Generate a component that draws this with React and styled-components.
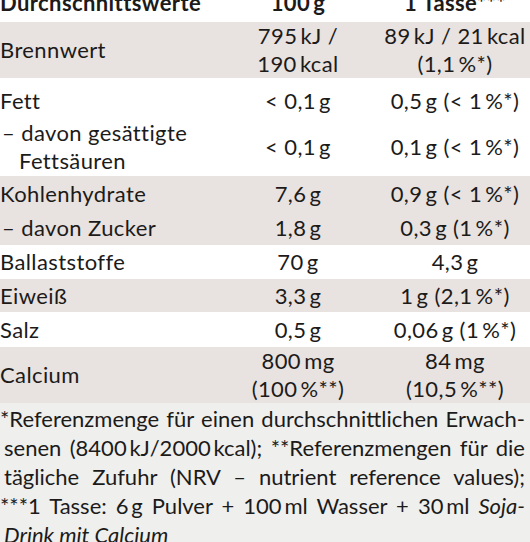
import React from 'react';
import styled, { createGlobalStyle } from 'styled-components';

const GlobalStyle = createGlobalStyle`
    html, body {
        margin: 0;
        padding: 0;
        background: #fff;
        overflow: hidden;
    }
    body {
        font-family: Lato, "Open Sans", sans-serif;
        font-size: 22px;
        letter-spacing: 0.4px;
        color: #1c1b1a;
    }
`

const T = '\u2009';

const rows = [
    { label: 'Brennwert', a: [`795${T}kJ /`, `190${T}kcal`], b: [`89${T}kJ / 21${T}kcal`, `(1,1${T}%*)`], shade: true, h: 56 },
    { label: 'Fett', a: [`< 0,1${T}g`], b: [`0,5${T}g (< 1${T}%*)`], h: 40, top: 5 },
    { label: ['– davon gesättigte', 'Fettsäuren'], sub: true, a: [`< 0,1${T}g`], b: [`0,1${T}g (< 1${T}%*)`], h: 58 },
    { label: 'Kohlenhydrate', a: [`7,6${T}g`], b: [`0,9${T}g (< 1${T}%*)`], shade: true, h: 35 },
    { label: '– davon Zucker', sub: true, a: [`1,8${T}g`], b: [`0,3${T}g (1${T}%*)`], shade: true, h: 34 },
    { label: 'Ballaststoffe', a: [`70${T}g`], b: [`4,3${T}g`], h: 34 },
    { label: 'Eiweiß', a: [`3,3${T}g`], b: [`1${T}g (2,1${T}%*)`], shade: true, h: 33 },
    { label: 'Salz', a: [`0,5${T}g`], b: [`0,06${T}g (1${T}%*)`], h: 35 },
    { label: 'Calcium', a: [`800${T}mg`, `(100${T}%**)`], b: [`84${T}mg`, `(10,5${T}%**)`], shade: true, h: 56 },
];

function Lines({ items }) {
    const list = Array.isArray(items) ? items : [items];
    return list.map((text, i) => <span key={i}>{text}</span>);
}

export default function App() {
    return (
        <>
            <GlobalStyle />
            <Sheet>
                <Row $h={38}>
                    <HeadCell>Durchschnittswerte</HeadCell>
                    <HeadCell $center>100{T}g</HeadCell>
                    <HeadCell $center>1 Tasse***</HeadCell>
                </Row>
                {rows.map((row, i) => (
                    <Row key={i} $h={row.h} $shade={row.shade} $top={row.top}>
                        <Label $sub={row.sub}><Lines items={row.label} /></Label>
                        <Value><Lines items={row.a} /></Value>
                        <Value><Lines items={row.b} /></Value>
                    </Row>
                ))}
                <Footnote>
                    <Line $hang>*Referenzmenge für einen durchschnittlichen Erwach-</Line>
                    <Line>senen (8400{T}kJ/2000{T}kcal); **Referenzmengen für die</Line>
                    <Line>tägliche Zufuhr (NRV – nutrient reference values);</Line>
                    <Line $hang>***1 Tasse: 6{T}g Pulver + 100{T}ml Wasser + 30{T}ml <em>Soja-</em></Line>
                    <Line $last><em>Drink mit Calcium</em></Line>
                </Footnote>
            </Sheet>
        </>
    )
}


// styled component
const Sheet = styled.div`
    width: 530px;
    margin-top: -16px;
`

const Row = styled.div`
    display: grid;
    grid-template-columns: 216px 164px 150px;
    align-items: center;
    height: ${p => p.$h}px;
    padding-top: ${p => p.$top || 0}px;
    box-sizing: border-box;
    background: ${p => p.$shade ? '#e8e2e0' : '#fff'};
`

const HeadCell = styled.div`
    font-weight: 700;
    line-height: 28px;
    white-space: nowrap;
    text-align: ${p => p.$center ? 'center' : 'left'};
`

const Label = styled.div`
    line-height: 28px;
    white-space: nowrap;
    padding-left: ${p => p.$sub ? '19px' : '0'};
    text-indent: ${p => p.$sub ? '-17px' : '0'};

    > span {
        display: block;
    }
    > span + span {
        text-indent: 0;
    }
`

const Value = styled.div`
    line-height: 28px;
    text-align: center;
    white-space: nowrap;

    > span {
        display: block;
    }
`

const Footnote = styled.div`
    background: #efefee;
    padding: 1px 5px 0 4px;
    line-height: 29px;
    letter-spacing: 0;
    height: 160px;
    box-sizing: border-box;
`

const Line = styled.div`
    white-space: nowrap;
    text-align: justify;
    text-align-last: ${p => p.$last ? 'left' : 'justify'};
    margin-left: ${p => p.$hang ? '-4px' : '0'};
`
